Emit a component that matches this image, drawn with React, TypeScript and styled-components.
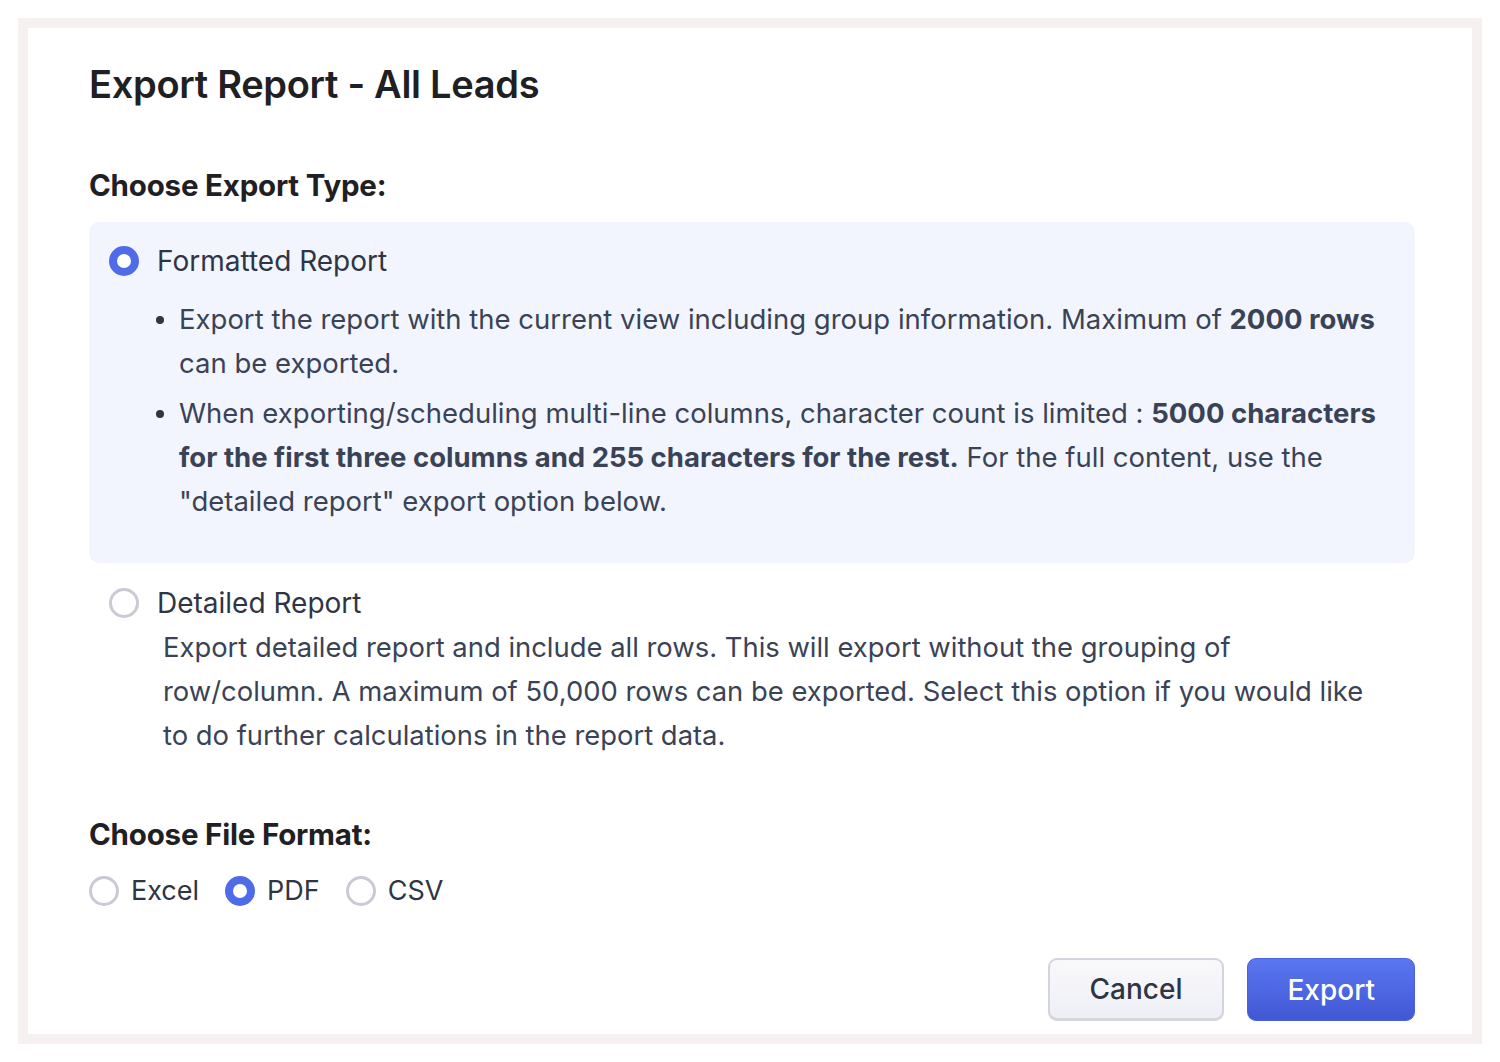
import React, { useState } from 'react';
import styled, { createGlobalStyle } from 'styled-components';

const GlobalStyle = createGlobalStyle`
  html, body {
    margin: 0;
    padding: 0;
    background: #ffffff;
  }
  body {
    font-family: Inter, "Noto Sans", sans-serif;
    color: #3a4356;
  }
`;

const Page = styled.div`
  padding: 18px;
  height: 1062px;
  box-sizing: border-box;
`;

const Frame = styled.div`
  border: 10px solid #f7f0f0;
  background: #fff;
  height: 1026px;
  box-sizing: border-box;
  padding: 32px 57px 0 61px;
  display: flex;
  flex-direction: column;
`;

const Title = styled.h1`
  margin: 0;
  font-size: 38px;
  font-weight: 600;
  color: #1f2023;
  line-height: 48px;
  letter-spacing: -0.3px;
`;

const SectionLabel = styled.h2<{ $top: number }>`
  margin: ${(p) => p.$top}px 0 0 0;
  font-size: 29.5px;
  font-weight: 700;
  color: #1f2023;
  line-height: 40px;
  letter-spacing: -0.2px;
`;

const OptionBox = styled.div<{ $active?: boolean }>`
  margin-top: ${(p) => (p.$active ? 17 : 0)}px;
  background: ${(p) => (p.$active ? '#f2f5fe' : 'transparent')};
  border-radius: 10px;
  padding: ${(p) => (p.$active ? '19px 20px 40px 20px' : '20px 20px 0 20px')};
`;

const RadioRow = styled.label<{ $size?: number }>`
  display: flex;
  align-items: center;
  gap: 18px;
  cursor: pointer;
  font-size: ${(p) => p.$size ?? 28}px;
  line-height: 40px;
  color: #2f3545;
`;

const RadioDot = styled.span<{ $checked?: boolean }>`
  width: 30px;
  height: 30px;
  box-sizing: border-box;
  border-radius: 50%;
  flex: none;
  border: ${(p) => (p.$checked ? '8px solid #4f6be8' : '3px solid #c8cad4')};
  background: #fff;
`;

const BulletList = styled.ul`
  margin: 16px 0 0 0;
  padding: 0 0 0 70px;
  list-style: none;
  display: flex;
  flex-direction: column;
  gap: 6px;
`;

const Bullet = styled.li`
  position: relative;
  font-size: 27.5px;
  line-height: 44px;
  color: #3a4356;

  &::before {
    content: '';
    position: absolute;
    left: -23px;
    top: 19px;
    width: 8px;
    height: 8px;
    border-radius: 50%;
    background: #2f3545;
  }

  b {
    font-weight: 700;
  }
`;

const Description = styled.p`
  margin: 2px 0 0 0;
  padding-left: 54px;
  font-size: 27.4px;
  line-height: 44px;
  color: #3a4356;
`;

const FormatRow = styled.div`
  display: flex;
  align-items: center;
  gap: 26px;
  margin-top: 17px;
`;

const FormatOption = styled(RadioRow)`
  gap: 12px;
`;

const Footer = styled.div`
  display: flex;
  justify-content: flex-end;
  gap: 23px;
  margin-top: 47px;
`;

const Button = styled.button<{ $primary?: boolean }>`
  height: 63px;
  padding: 0 ${(p) => (p.$primary ? 39 : 40)}px;
  border-radius: 9px;
  font-family: inherit;
  font-size: 28px;
  font-weight: 500;
  cursor: pointer;
  color: ${(p) => (p.$primary ? '#ffffff' : '#2f3545')};
  background: ${(p) =>
    p.$primary
      ? 'linear-gradient(#5a76f1, #4158d4)'
      : 'linear-gradient(#f9f9fc, #eeeff5)'};
  border: ${(p) => (p.$primary ? '1px solid #4a62dc' : '2px solid #d2d5df')};
  border-bottom-width: ${(p) => (p.$primary ? 1 : 3)}px;
`;

export default function App() {
  const [type, setType] = useState('formatted');
  const [format, setFormat] = useState('pdf');

  return (
    <Page>
      <GlobalStyle />
      <Frame>
        <Title>Export Report - All Leads</Title>

        <SectionLabel $top={57}>Choose Export Type:</SectionLabel>

        <OptionBox $active={type === 'formatted'}>
          <RadioRow onClick={() => setType('formatted')}>
            <RadioDot $checked={type === 'formatted'} />
            Formatted Report
          </RadioRow>
          <BulletList>
            <Bullet>
              Export the report with the current view including group information. Maximum of <b>2000 rows</b>
              <br />
              can be exported.
            </Bullet>
            <Bullet>
              When exporting/scheduling multi-line columns, character count is limited : <b>5000 characters</b>
              <br />
              <b>for the first three columns and 255 characters for the rest.</b> For the full content, use the
              <br />
              "detailed report" export option below.
            </Bullet>
          </BulletList>
        </OptionBox>

        <OptionBox $active={type === 'detailed'}>
          <RadioRow onClick={() => setType('detailed')}>
            <RadioDot $checked={type === 'detailed'} />
            Detailed Report
          </RadioRow>
          <Description>
            Export detailed report and include all rows. This will export without the grouping of
            <br />
            row/column. A maximum of 50,000 rows can be exported. Select this option if you would like
            <br />
            to do further calculations in the report data.
          </Description>
        </OptionBox>

        <SectionLabel $top={57}>Choose File Format:</SectionLabel>

        <FormatRow>
          {[
            ['excel', 'Excel'],
            ['pdf', 'PDF'],
            ['csv', 'CSV'],
          ].map(([key, label]) => (
            <FormatOption key={key} $size={27} onClick={() => setFormat(key)}>
              <RadioDot $checked={format === key} />
              {label}
            </FormatOption>
          ))}
        </FormatRow>

        <Footer>
          <Button>Cancel</Button>
          <Button $primary>Export</Button>
        </Footer>
      </Frame>
    </Page>
  );
}
